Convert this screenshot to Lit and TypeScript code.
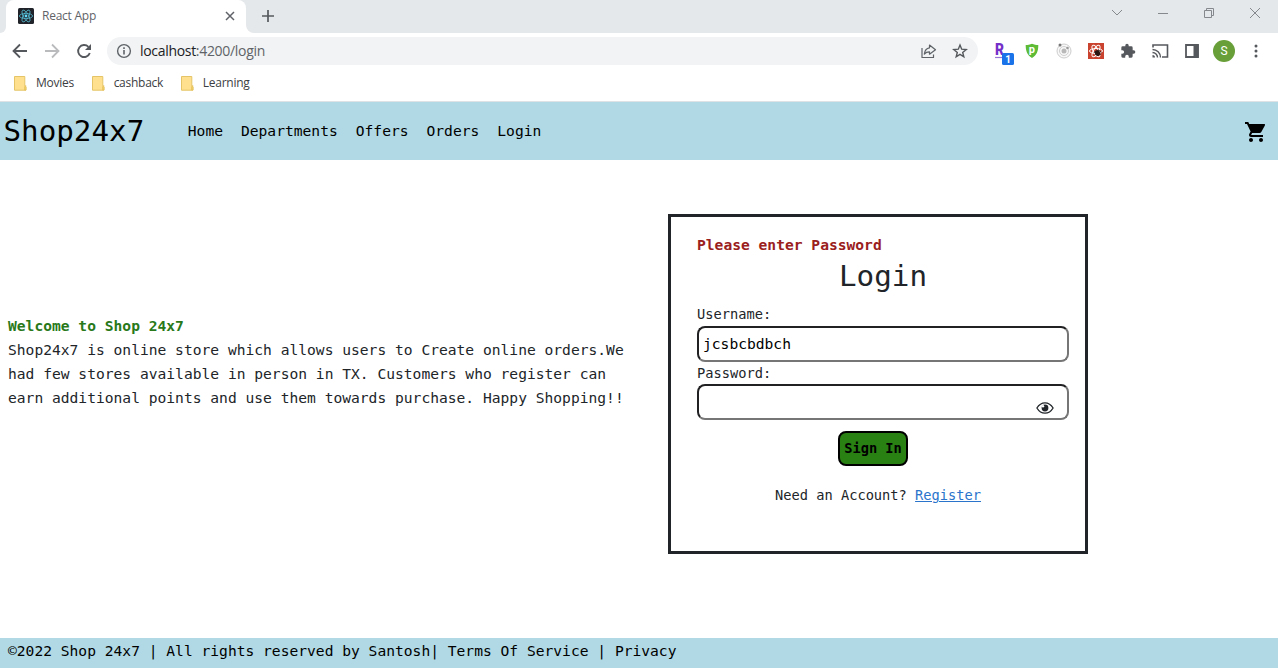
import { LitElement, html, css, svg } from "lit";
import { customElement } from "lit/decorators.js";

const folder = html`<svg class="folder" width="13" height="15" viewBox="0 0 13 15">
  <path d="M.5 .5h10.3v9.3l1.2 1.2v3.2H.5z" fill="#fee08f" stroke="#e5c467"/>
  <path d="M10.6 14v-3.4l1.3-1.2V14z" fill="#f7d774" stroke="#dfb84f" stroke-width=".6"/>
</svg>`;

@customElement("browser-chrome")
export class BrowserChrome extends LitElement {
  static styles = css`
    :host { display: block; background: #fff; font-family: "Open Sans", "Noto Sans", sans-serif; color: #3c4043; }
    svg { display: block; flex: none; }
    .strip { height: 33px; background: #e4e8eb; display: flex; }
    .lead { width: 6px; background: #fff; }
    .lead i { display: block; height: 100%; background: #e4e8eb; border-radius: 0 0 6px 0; }
    .tab { box-sizing: border-box; width: 240px; padding: 0 9px 1px 12px; background: #fff; border-radius: 8px 8px 0 0; display: flex; align-items: center; }
    .title { margin-left: 8px; flex: 1; font-size: 12px; letter-spacing: -0.25px; color: #5f6368; line-height: 32px; }
    .trail { flex: 1; background: #fff; }
    .trail > div { box-sizing: border-box; height: 33px; background: #e4e8eb; border-radius: 0 0 0 8px; display: flex; align-items: center; padding: 0 17px 1px 15px; }
    .window { margin-left: auto; display: flex; gap: 34px; align-items: center; margin-bottom: 6px; }
    .bar { height: 36px; display: flex; align-items: center; padding-left: 12px; }
    .nav { display: flex; gap: 16px; }
    .address { box-sizing: border-box; margin-left: 15px; width: 871px; height: 28px; border-radius: 14px; background: #f1f3f4; display: flex; align-items: center; padding: 0 10px 0 9px; }
    .url { margin-left: 8px; font-size: 14px; letter-spacing: -0.31px; color: #5f6368; flex: 1; }
    .url b { font-weight: 400; color: #202124; }
    .share { margin-right: 15px; }
    .ext { display: flex; align-items: center; gap: 16px; margin-left: 14px; }
    .reward { margin-right: -8px; }
    .cast { margin: 0 -1px; }
    .avatar { width: 22px; height: 22px; border-radius: 50%; background: #689f38; color: #fff; font: 12px/22px Roboto, sans-serif; text-align: center; margin: 0 -3px; }
    .marks { height: 33px; box-sizing: border-box; border-bottom: 1px solid #dfe2e4; display: flex; align-items: center; padding: 0 0 4px 14px; font-size: 12px; }
    .mark { display: flex; align-items: center; margin-right: 17.700px; letter-spacing: -0.26px; }
    .folder { margin-right: 9px; }
    .badge { font: bold 10px Roboto, sans-serif; }
    .r { font: 900 16px Roboto, sans-serif; }
    .p { font: bold 11px Roboto, sans-serif; }
  `;

  render() {
    const orbit = (a: number) => svg`<ellipse cx="8" cy="8" rx="6.6" ry="2.6" fill="none" stroke="#53b8cf" stroke-width=".8" transform="rotate(${a} 8 8)"/>`;
    return html`
      <div class="strip">
        <div class="lead"><i></i></div>
        <div class="tab">
          <svg width="16" height="16" viewBox="0 0 16 16"><rect width="16" height="16" rx="1.5" fill="#20232a"/>${[0, 60, 120].map(orbit)}<circle cx="8" cy="8" r="1.4" fill="#61dafb"/></svg>
          <span class="title">React App</span>
          <svg width="14" height="14" viewBox="0 0 14 14"><path d="M3 3l8 8M11 3l-8 8" stroke="#5f6368" stroke-width="1.5"/></svg>
        </div>
        <div class="trail"><div>
          <svg width="14" height="14" viewBox="0 0 14 14"><path d="M7 1v12M1 7h12" stroke="#55595d" stroke-width="1.7"/></svg>
          <div class="window">
            <svg width="12" height="12" viewBox="0 0 12 12"><path d="M1 3l5 5 5-5" fill="none" stroke="#85898d"/></svg>
            <svg width="12" height="12" viewBox="0 0 12 12"><path d="M1 6.5h10" stroke="#85898d"/></svg>
            <svg width="12" height="12" viewBox="0 0 12 12"><path d="M1.500 3.500h7v7h-7zM3.500 3.500v-2h7v7h-2" fill="none" stroke="#85898d"/></svg>
            <svg width="12" height="12" viewBox="0 0 12 12"><path d="M1 1l10 10M11 1L1 11" stroke="#85898d"/></svg>
          </div>
        </div></div>
      </div>
      <div class="bar">
        <div class="nav">
          <svg width="16" height="16" viewBox="0 0 16 16"><path d="M15 8H2M8 1.500L1.500 8 8 14.500" fill="none" stroke="#55585c" stroke-width="1.8"/></svg>
          <svg width="16" height="16" viewBox="0 0 16 16"><path d="M1 8h13M8 1.500L14.500 8 8 14.500" fill="none" stroke="#b9bbbd" stroke-width="1.8"/></svg>
          <svg width="16" height="16" viewBox="0 0 16 16"><path d="M13.800 10A6 6 0 1 1 12.400 3.800" fill="none" stroke="#55585c" stroke-width="1.9"/><path d="M15 1v6H9z" fill="#55585c"/></svg>
        </div>
        <div class="address">
          <svg width="16" height="16" viewBox="0 0 16 16"><circle cx="8" cy="8" r="6.400" fill="none" stroke="#5f6368" stroke-width="1.400"/><path d="M8 7v4.500M8 4.300v1.600" stroke="#5f6368" stroke-width="1.600"/></svg>
          <span class="url"><b>localhost</b>:4200/login</span>
          <svg class="share" width="17" height="16" viewBox="0 0 17 16"><path d="M2 5v9.500h11.500v-3M9.500 2L15.500 6.800l-6 4.400V8.800C7 8.700 5.700 9.500 4.300 11 4.700 7.600 6.500 5.200 9.500 4.800z" fill="none" stroke="#5f6368" stroke-width="1.200" stroke-linejoin="round"/></svg>
          <svg width="16" height="16" viewBox="0 0 16 16"><path d="M8 2l1.700 4.200 4.500.3-3.500 2.900 1.100 4.400L8 11.400l-3.800 2.400 1.100-4.400-3.500-2.900 4.500-.3z" fill="none" stroke="#55585c" stroke-width="1.400"/></svg>
        </div>
        <div class="ext">
          <svg class="reward" width="24" height="28" viewBox="0 0 24 28"><text class="r" x="3" y="18" fill="#7430c8" textLength="9" lengthAdjust="spacingAndGlyphs">R</text><path d="M3 20.500h7" stroke="#9b72d5" stroke-width="1.200"/><rect x="10" y="16" width="12" height="12" rx="1.500" fill="#1a73e8"/><text class="badge" x="13.200" y="25.700" fill="#fff">1</text></svg>
          <svg width="16" height="16" viewBox="0 0 16 16"><path d="M8 .8c2 1 4.200 1.200 6.300 1.200 0 5.500-1.200 10-6.300 13C2.900 12 1.700 7.500 1.700 2 3.800 2 6 1.800 8 .8z" fill="#5dbb36"/><text class="p" x="4.800" y="10" fill="#fff">p</text></svg>
          <svg width="16" height="16" viewBox="0 0 16 16"><circle cx="8" cy="8" r="7" fill="#f8f8f8" stroke="#cdcdcd"/><circle cx="8" cy="8" r="4.500" fill="none" stroke="#cfcfcf"/><circle cx="8" cy="8" r="2.500" fill="#b9b9b9"/><circle cx="4" cy="2" r="1.500" fill="#777"/><circle cx="11.500" cy="5" r="1.300" fill="#999"/></svg>
          <svg width="16" height="16" viewBox="0 0 16 16"><rect width="16" height="16" fill="#c9432f"/><g fill="none" stroke="#fff" stroke-width="1"><ellipse cx="8" cy="8" rx="6.500" ry="2.500"/><ellipse cx="8" cy="8" rx="6.500" ry="2.500" transform="rotate(60 8 8)"/><ellipse cx="8" cy="8" rx="6.500" ry="2.500" transform="rotate(120 8 8)"/></g><ellipse cx="9.500" cy="10" rx="2.500" ry="3" fill="#2a1713" transform="rotate(-35 9.500 10)"/><path d="M6 9l7 2.500M7 12l4-5M10 6.500l3.500 3" stroke="#2a1713" stroke-width=".8"/></svg>
          <svg width="16" height="16" viewBox="0 0 24 24"><path d="M20.500 11H19V7a2 2 0 0 0-2-2h-4V3.500a2.500 2.500 0 0 0-5 0V5H4a2 2 0 0 0-2 2v3.800h1.500a2.700 2.700 0 0 1 0 5.400H2V20a2 2 0 0 0 2 2h3.800v-1.500a2.700 2.700 0 0 1 5.400 0V22H17a2 2 0 0 0 2-2v-4h1.500a2.500 2.500 0 0 0 0-5z" fill="#55585c"/></svg>
          <svg class="cast" width="18" height="16" viewBox="0 0 18 16"><path d="M2 4.500V2h14.500v12H11" fill="none" stroke="#55585c" stroke-width="1.600"/><path d="M1.500 6.500a8 8 0 0 1 8 8M1.500 9.500a5 5 0 0 1 5 5" fill="none" stroke="#55585c" stroke-width="1.400"/><path d="M1.500 12v2.500H4a2.500 2.500 0 0 0-2.500-2.500z" fill="#55585c"/></svg>
          <svg width="16" height="16" viewBox="0 0 16 16"><path d="M2 2h12v12H2z" fill="none" stroke="#55585c" stroke-width="1.800"/><path d="M9.500 1.500h5v13h-5z" fill="#55585c"/></svg>
          <div class="avatar">S</div>
          <svg width="16" height="16" viewBox="0 0 16 16"><g fill="#55585c"><circle cx="8" cy="3" r="1.500"/><circle cx="8" cy="8" r="1.500"/><circle cx="8" cy="13" r="1.500"/></g></svg>
        </div>
      </div>
      <div class="marks">${["Movies", "cashback", "Learning"].map((t) => html`<span class="mark">${folder}${t}</span>`)}</div>
    `;
  }
}

@customElement("app-root")
export class AppRoot extends LitElement {
  static styles = css`
    :host { display: flex; flex-direction: column; height: 668px; background: #fff; overflow: hidden; color: #212529; font: 14.617px/24px "DejaVu Sans Mono", monospace; }
    svg { display: block; flex: none; }
    a { color: inherit; text-decoration: none; white-space: pre; }
    header { box-sizing: border-box; height: 58px; background: #b0d9e5; color: #000; display: flex; align-items: center; padding: 0 10px 0 3.500px; }
    .brand { font-size: 29.23px; width: 184.300px; line-height: 58px; }
    nav { display: flex; gap: 18px; flex: 1; }
    .cart { margin-top: 2px; }
    main { flex: 1; display: flex; align-items: flex-start; }
    .intro { box-sizing: border-box; width: 668px; padding: 154px 0 0 8px; white-space: nowrap; }
    .intro p, .intro h2 { margin: 0; font: inherit; }
    .intro h2 { font-weight: 700; color: #29791a; }
    .card { box-sizing: border-box; width: 420px; height: 340px; margin-top: 54px; border: 3px solid #212529; padding: 16px 16px 0 26px; font-size: 13.704px; display: flex; flex-direction: column; }
    .error { font-size: 14.617px; font-weight: 700; color: #9a2020; }
    .card h1 { margin: 0; font: 29.23px/38px "DejaVu Sans Mono", monospace; text-align: center; }
    label { line-height: 22px; margin-top: 8px; }
    label.second { margin-top: 0; }
    .field { box-sizing: border-box; width: 372px; height: 36px; margin-top: 1px; border: 2px solid; border-color: #212123 #767676 #767676 #212123; border-radius: 8px; display: flex; align-items: center; padding: 0 13px 0 4px; font-size: 14.617px; color: #000; background: #fff; }
    .second + .field { margin-top: 0; }
    .eye { margin: 11px 0 0 auto; }
    button { box-sizing: border-box; align-self: center; width: 70px; height: 35px; margin: 11px 20px 0 0; padding: 0 0 2px; border: 2px solid #000; border-radius: 8px; background: #298013; color: #000; font: 700 13.704px "DejaVu Sans Mono", monospace; white-space: nowrap; display: flex; align-items: center; justify-content: center; }
    .need { margin: 17px 10px 0 0; text-align: center; white-space: nowrap; }
    .need a { color: #2a74cc; text-decoration: underline; }
    footer { height: 30px; padding-left: 8px; background: #b0d9e5; color: #000; line-height: 26px; white-space: pre; }
  `;

  render() {
    return html`
      <browser-chrome></browser-chrome>
      <header>
        <a class="brand">Shop24x7</a>
        <nav>${["Home", "Departments", "Offers", "Orders", "Login"].map((t) => html`<a>${t}</a>`)}</nav>
        <svg class="cart" width="24" height="24" viewBox="0 0 24 24"><path d="M7 18c-1.100 0-1.990.9-1.990 2S5.900 22 7 22s2-.9 2-2-.9-2-2-2zM1 2v2h2l3.600 7.590-1.350 2.450c-.16.280-.25.610-.25.960 0 1.100.9 2 2 2h12v-2H7.420c-.14 0-.25-.11-.25-.25l.03-.12.9-1.630h7.450c.75 0 1.410-.41 1.750-1.030l3.580-6.490A1 1 0 0 0 20 4H5.210l-.94-2H1zm16 16c-1.100 0-1.990.9-1.990 2s.89 2 1.990 2 2-.9 2-2-.9-2-2-2z"/></svg>
      </header>
      <main>
        <section class="intro">
          <h2>Welcome to Shop 24x7</h2>
          <p>Shop24x7 is online store which allows users to Create online orders.We<br>had few stores available in person in TX. Customers who register can<br>earn additional points and use them towards purchase. Happy Shopping!!</p>
        </section>
        <section class="card">
          <div class="error">Please enter Password</div>
          <h1>Login</h1>
          <label>Username:</label>
          <div class="field">jcsbcbdbch</div>
          <label class="second">Password:</label>
          <div class="field"><svg class="eye" width="18" height="12" viewBox="0 0 18 12"><path d="M.9 6C3 2.500 5.700.8 9 .8S15 2.500 17.100 6C15 9.500 12.300 11.200 9 11.200S3 9.500.9 6z" fill="#fff" stroke="#212529" stroke-width="1.300"/><circle cx="9" cy="6" r="3.400" fill="#212529"/><circle cx="7" cy="4.200" r="1.200" fill="#fff"/></svg></div>
          <button>Sign In</button>
          <div class="need">Need an Account? <a>Register</a></div>
        </section>
      </main>
      <footer>©2022 Shop 24x7 | All rights reserved by Santosh| Terms Of Service | Privacy</footer>
    `;
  }
}
